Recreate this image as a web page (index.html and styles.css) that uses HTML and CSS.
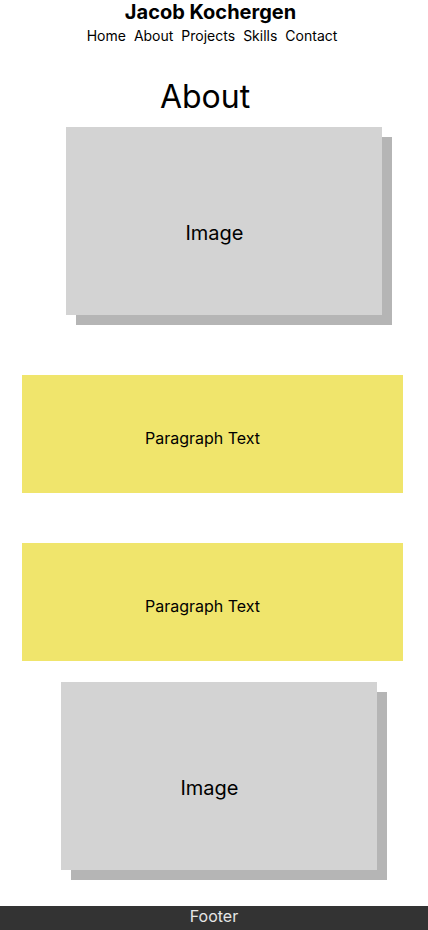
FILE: index.html
```html
<!DOCTYPE html>
<html lang="en">
<head>
<meta charset="utf-8">
<title>Jacob Kochergen - About</title>
<link rel="stylesheet" href="styles.css">
</head>
<body>
<header class="site-header">
  <h1 class="site-title">Jacob Kochergen</h1>
  <nav class="site-nav">
    <a href="#">Home</a>
    <a href="#">About</a>
    <a href="#">Projects</a>
    <a href="#">Skills</a>
    <a href="#">Contact</a>
  </nav>
</header>
<main class="content">
  <h2 class="page-title">About</h2>
  <div class="image-box image-box--first">Image</div>
  <div class="paragraph-box paragraph-box--first">Paragraph Text</div>
  <div class="paragraph-box paragraph-box--second">Paragraph Text</div>
  <div class="image-box image-box--second">Image</div>
</main>
<footer class="site-footer">Footer</footer>
</body>
</html>
```
FILE: styles.css
```css
* { box-sizing: border-box; }
html, body { margin: 0; padding: 0; }
body {
  font-family: Inter, "Noto Sans", sans-serif;
  color: #000;
  background: #fff;
  width: 428px;
  min-height: 930px;
  display: flex;
  flex-direction: column;
}
.site-header {
  display: flex;
  flex-direction: column;
  align-items: center;
}
.site-title {
  margin: 0;
  font-size: 20px;
  line-height: 24px;
  font-weight: 700;
  padding-right: 7px;
}
.site-nav {
  display: flex;
  gap: 8px;
  font-size: 14px;
  line-height: 20px;
  margin-top: 2px;
  padding-right: 4px;
}
.site-nav a { color: #000; text-decoration: none; }
.content {
  display: flex;
  flex-direction: column;
  flex: 1;
}
.page-title {
  margin: 31px 0 0 0;
  font-size: 32px;
  line-height: 39px;
  font-weight: 400;
  text-align: center;
  padding-right: 18px;
}
.image-box {
  width: 316px;
  height: 188px;
  background: #d3d3d3;
  box-shadow: 10px 10px 0 #b5b5b5;
  display: flex;
  align-items: center;
  justify-content: center;
  font-size: 20px;
  padding: 24px 19px 0 0;
}
.image-box--first { margin: 11px 0 0 66px; }
.image-box--second { margin: 21px 0 0 61px; }
.paragraph-box {
  width: 381px;
  height: 118px;
  margin-left: 22px;
  background: #f0e56c;
  display: flex;
  align-items: center;
  justify-content: center;
  font-size: 16px;
  padding: 8px 20px 0 0;
}
.paragraph-box--first { margin-top: 60px; }
.paragraph-box--second { margin-top: 50px; }
.site-footer {
  margin-top: 36px;
  height: 24px;
  background: #333;
  color: #e6e6e6;
  font-size: 16px;
  line-height: 20px;
  text-align: center;
}
```
